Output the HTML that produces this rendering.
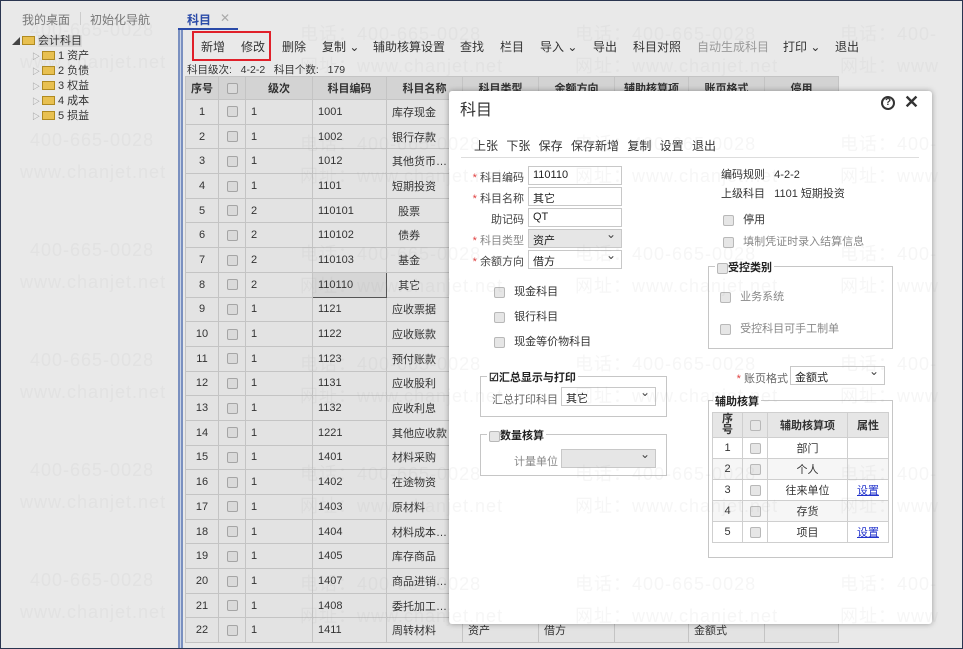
<!DOCTYPE html>
<html><head><meta charset="utf-8"><style>
*{box-sizing:border-box;margin:0;padding:0}
body{width:963px;height:649px;overflow:hidden;background:#e9e9e9;font-family:"Liberation Sans","Noto Sans CJK SC",sans-serif;font-size:12px;color:#333;position:relative}
.frame{position:absolute;inset:0;border:1px solid #2a3550;pointer-events:none;z-index:50}
.tabs{position:absolute;left:0;top:0;width:963px;height:30px}
.tab{position:absolute;top:11px;font-size:12px;color:#777}
.tree{position:absolute;left:12px;top:34px;font-size:11px;color:#333;line-height:15px}
.fold{display:inline-block;width:13px;height:9px;background:#e8c050;border:1px solid #b08a20;vertical-align:-1px;margin-right:3px}
.ar{display:inline-block;font-size:8px;color:#888;width:10px}
.vbar{position:absolute;left:178px;top:30px;width:5px;height:619px;border-left:2px solid #7a90c0;border-right:2px solid #7a90c0;background:#c9d3e6}
.tb{position:absolute;top:38px;font-size:12px;color:#333}
.info{position:absolute;left:187px;top:62px;font-size:10.5px;color:#333}
table.g{position:absolute;left:185px;top:76px;border-collapse:collapse;table-layout:fixed;background:#e3e3e3}
.g td,.g th{border:1px solid #c4c4c4;height:24.7px;font-size:11px;padding:0 5px;white-space:nowrap;overflow:hidden}
.g th{background:#d3d3d3;font-weight:bold;height:23px;text-align:center}
.cb{display:inline-block;width:11px;height:11px;border:1px solid #a5a5a5;border-radius:2px;background:#dadada;vertical-align:middle}
.wm{position:absolute;font-size:18px;color:rgba(160,160,160,.09);white-space:nowrap;letter-spacing:1px;z-index:40;pointer-events:none}
.dlg{position:absolute;left:449px;top:91px;width:483px;height:533px;background:#fff;border-radius:3px;box-shadow:0 0 6px rgba(0,0,0,.35);z-index:10}
.abs{position:absolute;white-space:nowrap}
.lay{position:absolute;left:0;top:0;width:963px;height:649px;z-index:20}
.lbl{position:absolute;font-size:11px;color:#444;text-align:right;white-space:nowrap}
.st{color:#e04040}
.inp{position:absolute;height:19px;border:1px solid #c8c8c8;background:#fff;font-size:11px;padding:2px 4px;color:#222;white-space:nowrap}
.sel::after{content:"⌄";position:absolute;right:5px;top:-3px;font-size:12px;color:#444}
.dcb{display:inline-block;width:11px;height:11px;border:1px solid #b8b8b8;border-radius:2px;background:#e6e6e6;vertical-align:middle}
.fs{position:absolute;border:1px solid #c6c6c6}
.leg{position:absolute;top:-8px;left:6px;background:#fff;font-weight:bold;font-size:11px;padding:0 2px;color:#222;white-space:nowrap}
table.a{position:absolute;left:712px;top:412px;width:176px;border-collapse:collapse;table-layout:fixed}
.a td,.a th{border:1px solid #cfcfcf;height:21px;font-size:11px;text-align:center;padding:0;white-space:nowrap}
.a th{background:#e6e6e6;height:25px;font-weight:bold}
.a a{color:#2233cc;text-decoration:underline}
</style></head><body>
<div class="tabs">
<span class="tab" style="left:22px">我的桌面</span>
<span style="position:absolute;left:80px;top:12px;width:1px;height:13px;background:#ccc"></span>
<span class="tab" style="left:90px">初始化导航</span>
<span class="tab" style="left:187px;color:#2a4aa8;font-weight:bold">科目</span>
<span class="tab" style="left:220px;color:#aaa">✕</span>
<div style="position:absolute;left:178px;top:28px;width:60px;height:2px;background:#2a4aa8"></div>
</div>
<div class="tree">
<div><span class="ar" style="color:#444">◢</span><span class="fold"></span><span style="background:#dcdcdc">会计科目</span></div>
<div style="padding-left:20px"><span class="ar">▷</span><span class="fold"></span>1 资产</div>
<div style="padding-left:20px"><span class="ar">▷</span><span class="fold"></span>2 负债</div>
<div style="padding-left:20px"><span class="ar">▷</span><span class="fold"></span>3 权益</div>
<div style="padding-left:20px"><span class="ar">▷</span><span class="fold"></span>4 成本</div>
<div style="padding-left:20px"><span class="ar">▷</span><span class="fold"></span>5 损益</div>
</div>
<div class="vbar"></div>
<div style="position:absolute;left:192px;top:31px;width:79px;height:30px;border:2px solid #e0202a"></div>
<span class="tb" style="left:201px">新增</span><span class="tb" style="left:241px">修改</span><span class="tb" style="left:282px">删除</span><span class="tb" style="left:322px">复制 ⌄</span><span class="tb" style="left:373px">辅助核算设置</span><span class="tb" style="left:460px">查找</span><span class="tb" style="left:500px">栏目</span><span class="tb" style="left:540px">导入 ⌄</span><span class="tb" style="left:593px">导出</span><span class="tb" style="left:633px">科目对照</span><span class="tb" style="left:697px;color:#999">自动生成科目</span><span class="tb" style="left:783px">打印 ⌄</span><span class="tb" style="left:835px">退出</span>
<div class="info">科目级次:&nbsp;&nbsp;&nbsp;4-2-2&nbsp;&nbsp;&nbsp;科目个数:&nbsp;&nbsp;&nbsp;179</div>
<table class="g">
<colgroup><col style="width:31px"><col style="width:27px"><col style="width:67px"><col style="width:74px"><col style="width:76px"><col style="width:76px"><col style="width:76px"><col style="width:74px"><col style="width:76px"><col style="width:74px"></colgroup>
<tr><th>序号</th><th><span class="cb"></span></th><th>级次</th><th>科目编码</th><th>科目名称</th><th>科目类型</th><th>余额方向</th><th>辅助核算项</th><th>账页格式</th><th>停用</th></tr>
<tr><td align=center>1</td><td align=center><span class="cb"></span></td><td>1</td><td>1001</td><td>库存现金</td><td></td><td></td><td></td><td></td><td></td></tr>
<tr><td align=center>2</td><td align=center><span class="cb"></span></td><td>1</td><td>1002</td><td>银行存款</td><td></td><td></td><td></td><td></td><td></td></tr>
<tr><td align=center>3</td><td align=center><span class="cb"></span></td><td>1</td><td>1012</td><td>其他货币…</td><td></td><td></td><td></td><td></td><td></td></tr>
<tr><td align=center>4</td><td align=center><span class="cb"></span></td><td>1</td><td>1101</td><td>短期投资</td><td></td><td></td><td></td><td></td><td></td></tr>
<tr><td align=center>5</td><td align=center><span class="cb"></span></td><td>2</td><td>110101</td><td>&nbsp;&nbsp;股票</td><td></td><td></td><td></td><td></td><td></td></tr>
<tr><td align=center>6</td><td align=center><span class="cb"></span></td><td>2</td><td>110102</td><td>&nbsp;&nbsp;债券</td><td></td><td></td><td></td><td></td><td></td></tr>
<tr><td align=center>7</td><td align=center><span class="cb"></span></td><td>2</td><td>110103</td><td>&nbsp;&nbsp;基金</td><td></td><td></td><td></td><td></td><td></td></tr>
<tr><td align=center>8</td><td align=center><span class="cb"></span></td><td>2</td><td style="border:1px solid #555;background:#d6d6d6">110110</td><td>&nbsp;&nbsp;其它</td><td></td><td></td><td></td><td></td><td></td></tr>
<tr><td align=center>9</td><td align=center><span class="cb"></span></td><td>1</td><td>1121</td><td>应收票据</td><td></td><td></td><td></td><td></td><td></td></tr>
<tr><td align=center>10</td><td align=center><span class="cb"></span></td><td>1</td><td>1122</td><td>应收账款</td><td></td><td></td><td></td><td></td><td></td></tr>
<tr><td align=center>11</td><td align=center><span class="cb"></span></td><td>1</td><td>1123</td><td>预付账款</td><td></td><td></td><td></td><td></td><td></td></tr>
<tr><td align=center>12</td><td align=center><span class="cb"></span></td><td>1</td><td>1131</td><td>应收股利</td><td></td><td></td><td></td><td></td><td></td></tr>
<tr><td align=center>13</td><td align=center><span class="cb"></span></td><td>1</td><td>1132</td><td>应收利息</td><td></td><td></td><td></td><td></td><td></td></tr>
<tr><td align=center>14</td><td align=center><span class="cb"></span></td><td>1</td><td>1221</td><td>其他应收款</td><td></td><td></td><td></td><td></td><td></td></tr>
<tr><td align=center>15</td><td align=center><span class="cb"></span></td><td>1</td><td>1401</td><td>材料采购</td><td></td><td></td><td></td><td></td><td></td></tr>
<tr><td align=center>16</td><td align=center><span class="cb"></span></td><td>1</td><td>1402</td><td>在途物资</td><td></td><td></td><td></td><td></td><td></td></tr>
<tr><td align=center>17</td><td align=center><span class="cb"></span></td><td>1</td><td>1403</td><td>原材料</td><td></td><td></td><td></td><td></td><td></td></tr>
<tr><td align=center>18</td><td align=center><span class="cb"></span></td><td>1</td><td>1404</td><td>材料成本…</td><td></td><td></td><td></td><td></td><td></td></tr>
<tr><td align=center>19</td><td align=center><span class="cb"></span></td><td>1</td><td>1405</td><td>库存商品</td><td></td><td></td><td></td><td></td><td></td></tr>
<tr><td align=center>20</td><td align=center><span class="cb"></span></td><td>1</td><td>1407</td><td>商品进销…</td><td></td><td></td><td></td><td></td><td></td></tr>
<tr><td align=center>21</td><td align=center><span class="cb"></span></td><td>1</td><td>1408</td><td>委托加工…</td><td></td><td></td><td></td><td></td><td></td></tr>
<tr><td align=center>22</td><td align=center><span class="cb"></span></td><td>1</td><td>1411</td><td>周转材料</td><td>资产</td><td>借方</td><td></td><td>金额式</td><td></td></tr>
</table>

<div class="dlg">
<div class="abs" style="left:11px;top:5px;font-size:16px;color:#333">科目</div>
<div class="abs" style="left:432px;top:5px;width:14px;height:14px;border:2px solid #333;border-radius:50%;font-size:10px;font-weight:bold;text-align:center;line-height:10px">?</div>
<div class="abs" style="left:455px;top:1px;font-size:18px;font-weight:bold;color:#333">✕</div>
<div class="abs" style="left:25px;top:46px;font-size:12px;color:#333;word-spacing:5px">上张 下张 保存 保存新增 复制 设置 退出</div>
<div class="abs" style="left:12px;top:66px;width:458px;height:1px;background:#ddd"></div>
</div>
<div class="lay">
<div class="lbl" style="left:470px;top:169px;width:54px"><span class="st">* </span>科目编码</div>
<div class="inp" style="left:528px;top:166px;width:94px">110110</div>
<div class="lbl" style="left:470px;top:190px;width:54px"><span class="st">* </span>科目名称</div>
<div class="inp" style="left:528px;top:187px;width:94px">其它</div>
<div class="lbl" style="left:470px;top:211px;width:54px">助记码</div>
<div class="inp" style="left:528px;top:208px;width:94px">QT</div>
<div class="lbl" style="left:470px;top:232px;width:54px;color:#888"><span class="st">* </span>科目类型</div>
<div class="inp sel" style="left:528px;top:229px;width:94px;background:#e6e6e6">资产</div>
<div class="lbl" style="left:470px;top:253px;width:54px"><span class="st">* </span>余额方向</div>
<div class="inp sel" style="left:528px;top:250px;width:94px">借方</div>
<div class="abs" style="left:494px;top:283px;font-size:11px"><span class="dcb"></span>&nbsp;&nbsp;&nbsp;现金科目</div>
<div class="abs" style="left:494px;top:308px;font-size:11px"><span class="dcb"></span>&nbsp;&nbsp;&nbsp;银行科目</div>
<div class="abs" style="left:494px;top:333px;font-size:11px"><span class="dcb"></span>&nbsp;&nbsp;&nbsp;现金等价物科目</div>
<div class="abs" style="left:721px;top:166px;font-size:11px">编码规则&nbsp;&nbsp;&nbsp;4-2-2</div>
<div class="abs" style="left:721px;top:185px;font-size:11px">上级科目&nbsp;&nbsp;&nbsp;1101 短期投资</div>
<div class="abs" style="left:723px;top:211px;font-size:11px"><span class="dcb"></span>&nbsp;&nbsp;&nbsp;停用</div>
<div class="abs" style="left:723px;top:233px;font-size:11px;color:#888"><span class="dcb"></span>&nbsp;&nbsp;&nbsp;填制凭证时录入结算信息</div>
<div class="fs" style="left:708px;top:266px;width:185px;height:83px"><div class="leg"><span class="dcb"></span>受控类别</div></div>
<div class="abs" style="left:720px;top:288px;font-size:11px;color:#888"><span class="dcb"></span>&nbsp;&nbsp;&nbsp;业务系统</div>
<div class="abs" style="left:720px;top:320px;font-size:11px;color:#888"><span class="dcb"></span>&nbsp;&nbsp;&nbsp;受控科目可手工制单</div>
<div class="fs" style="left:480px;top:376px;width:187px;height:41px"><div class="leg">☑汇总显示与打印</div></div>
<div class="lbl" style="left:490px;top:391px;width:68px;color:#666">汇总打印科目</div>
<div class="inp sel" style="left:561px;top:387px;width:95px">其它</div>
<div class="fs" style="left:480px;top:434px;width:187px;height:42px"><div class="leg"><span class="dcb"></span>数量核算</div></div>
<div class="lbl" style="left:500px;top:453px;width:58px;color:#888">计量单位</div>
<div class="inp sel" style="left:561px;top:449px;width:95px;background:#e6e6e6"></div>
<div class="lbl" style="left:730px;top:370px;width:58px;color:#666"><span class="st">* </span>账页格式</div>
<div class="inp sel" style="left:790px;top:366px;width:95px">金额式</div>
<div class="fs" style="left:708px;top:400px;width:185px;height:158px"><div class="leg" style="left:4px">辅助核算</div></div>
<table class="a">
<colgroup><col style="width:30px"><col style="width:25px"><col style="width:80px"><col style="width:41px"></colgroup>
<tr><th style="line-height:11px">序<br>号</th><th><span class="dcb"></span></th><th>辅助核算项</th><th>属性</th></tr>
<tr><td>1</td><td><span class="dcb"></span></td><td>部门</td><td></td></tr>
<tr style="background:#f6f6f6"><td>2</td><td><span class="dcb"></span></td><td>个人</td><td></td></tr>
<tr><td>3</td><td><span class="dcb"></span></td><td>往来单位</td><td><a>设置</a></td></tr>
<tr style="background:#f6f6f6"><td>4</td><td><span class="dcb"></span></td><td>存货</td><td></td></tr>
<tr><td>5</td><td><span class="dcb"></span></td><td>项目</td><td><a>设置</a></td></tr>
</table>
</div>

<div class="wm" style="left:30px;top:20px">400-665-0028</div><div class="wm" style="left:300px;top:20px">电话：400-665-0028</div><div class="wm" style="left:575px;top:20px">电话：400-665-0028</div><div class="wm" style="left:840px;top:20px">电话：400-</div>
<div class="wm" style="left:20px;top:52px">www.chanjet.net</div><div class="wm" style="left:300px;top:52px">网址：www.chanjet.net</div><div class="wm" style="left:575px;top:52px">网址：www.chanjet.net</div><div class="wm" style="left:840px;top:52px">网址：www</div>
<div class="wm" style="left:30px;top:130px">400-665-0028</div><div class="wm" style="left:300px;top:130px">电话：400-665-0028</div><div class="wm" style="left:575px;top:130px">电话：400-665-0028</div><div class="wm" style="left:840px;top:130px">电话：400-</div>
<div class="wm" style="left:20px;top:162px">www.chanjet.net</div><div class="wm" style="left:300px;top:162px">网址：www.chanjet.net</div><div class="wm" style="left:575px;top:162px">网址：www.chanjet.net</div><div class="wm" style="left:840px;top:162px">网址：www</div>
<div class="wm" style="left:30px;top:240px">400-665-0028</div><div class="wm" style="left:300px;top:240px">电话：400-665-0028</div><div class="wm" style="left:575px;top:240px">电话：400-665-0028</div><div class="wm" style="left:840px;top:240px">电话：400-</div>
<div class="wm" style="left:20px;top:272px">www.chanjet.net</div><div class="wm" style="left:300px;top:272px">网址：www.chanjet.net</div><div class="wm" style="left:575px;top:272px">网址：www.chanjet.net</div><div class="wm" style="left:840px;top:272px">网址：www</div>
<div class="wm" style="left:30px;top:350px">400-665-0028</div><div class="wm" style="left:300px;top:350px">电话：400-665-0028</div><div class="wm" style="left:575px;top:350px">电话：400-665-0028</div><div class="wm" style="left:840px;top:350px">电话：400-</div>
<div class="wm" style="left:20px;top:382px">www.chanjet.net</div><div class="wm" style="left:300px;top:382px">网址：www.chanjet.net</div><div class="wm" style="left:575px;top:382px">网址：www.chanjet.net</div><div class="wm" style="left:840px;top:382px">网址：www</div>
<div class="wm" style="left:30px;top:460px">400-665-0028</div><div class="wm" style="left:300px;top:460px">电话：400-665-0028</div><div class="wm" style="left:575px;top:460px">电话：400-665-0028</div><div class="wm" style="left:840px;top:460px">电话：400-</div>
<div class="wm" style="left:20px;top:492px">www.chanjet.net</div><div class="wm" style="left:300px;top:492px">网址：www.chanjet.net</div><div class="wm" style="left:575px;top:492px">网址：www.chanjet.net</div><div class="wm" style="left:840px;top:492px">网址：www</div>
<div class="wm" style="left:30px;top:570px">400-665-0028</div><div class="wm" style="left:300px;top:570px">电话：400-665-0028</div><div class="wm" style="left:575px;top:570px">电话：400-665-0028</div><div class="wm" style="left:840px;top:570px">电话：400-</div>
<div class="wm" style="left:20px;top:602px">www.chanjet.net</div><div class="wm" style="left:300px;top:602px">网址：www.chanjet.net</div><div class="wm" style="left:575px;top:602px">网址：www.chanjet.net</div><div class="wm" style="left:840px;top:602px">网址：www</div>
<div class="frame"></div>
</body></html>
